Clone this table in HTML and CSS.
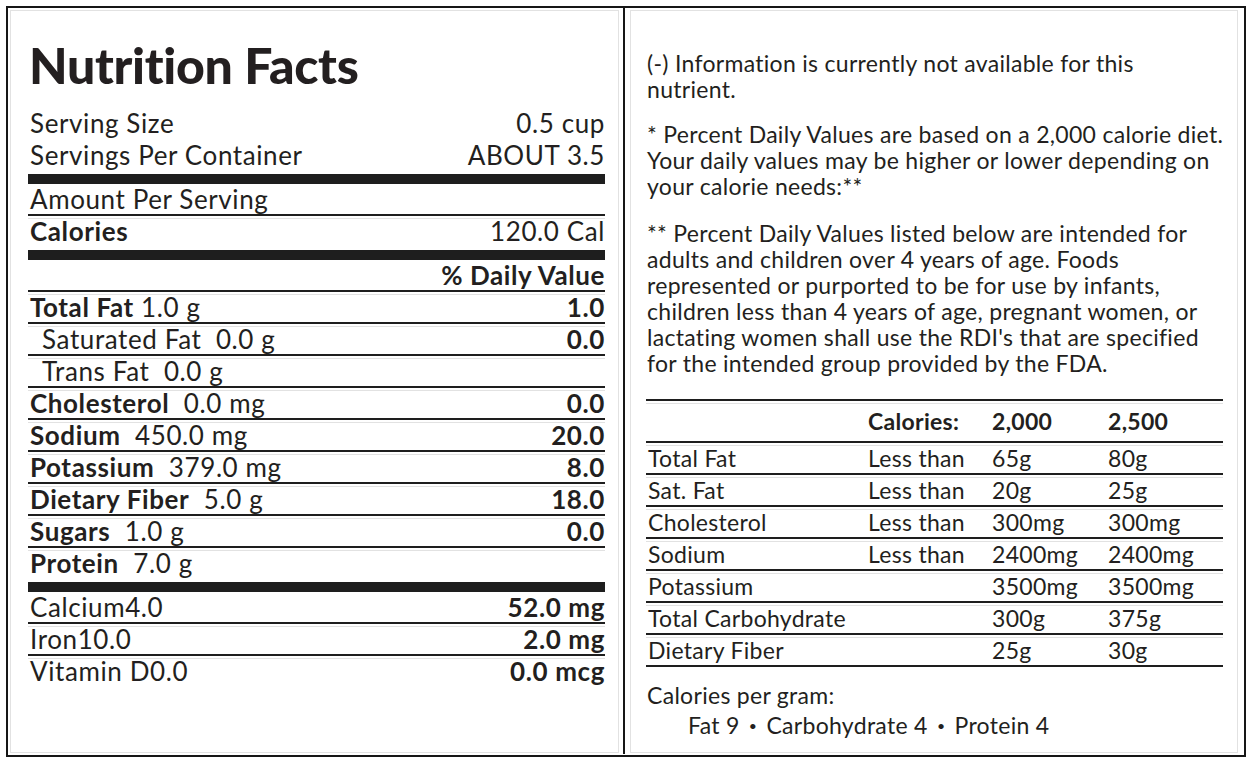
FILE: index.html
```html
<!DOCTYPE html>
<html lang="en">
<head>
<meta charset="utf-8">
<title>Nutrition Facts</title>
<link rel="stylesheet" href="styles.css">
</head>
<body>
<div class="frame">
  <section class="cell left">
    <h1 class="title">Nutrition Facts</h1>
    <div class="plain"><span>Serving Size</span><span>0.5 cup</span></div>
    <div class="plain"><span>Servings Per Container</span><span>ABOUT 3.5</span></div>
    <div class="thick"></div>
    <div class="row ruled"><span>Amount Per Serving</span></div>
    <div class="row ghost"><span><b>Calories</b></span><span>120.0 Cal</span></div>
    <div class="thick"></div>
    <div class="row ruled"><span></span><b>% Daily Value</b></div>
    <div class="row ruled ghost"><span><b>Total Fat</b> 1.0 g</span><b>1.0</b></div>
    <div class="row ruled ghost sub"><span>Saturated Fat&nbsp; 0.0 g</span><b>0.0</b></div>
    <div class="row ruled ghost sub"><span>Trans Fat&nbsp; 0.0 g</span></div>
    <div class="row ruled ghost"><span><b>Cholesterol</b>&nbsp; 0.0 mg</span><b>0.0</b></div>
    <div class="row ruled ghost"><span><b>Sodium</b>&nbsp; 450.0 mg</span><b>20.0</b></div>
    <div class="row ruled ghost"><span><b>Potassium</b>&nbsp; 379.0 mg</span><b>8.0</b></div>
    <div class="row ruled ghost"><span><b>Dietary Fiber</b>&nbsp; 5.0 g</span><b>18.0</b></div>
    <div class="row ruled ghost"><span><b>Sugars</b>&nbsp; 1.0 g</span><b>0.0</b></div>
    <div class="row ghost"><span><b>Protein</b>&nbsp; 7.0 g</span></div>
    <div class="thick"></div>
    <div class="row ruled"><span>Calcium4.0</span><b>52.0 mg</b></div>
    <div class="row ruled ghost"><span>Iron10.0</span><b>2.0 mg</b></div>
    <div class="row ghost"><span>Vitamin D0.0</span><b>0.0 mcg</b></div>
  </section>
  <div class="divider"></div>
  <section class="cell right">
    <p class="note">(-) Information is currently not available for this<br>nutrient.</p>
    <p class="note">* Percent Daily Values are based on a 2,000 calorie diet.<br>Your daily values may be higher or lower depending on<br>your calorie needs:**</p>
    <p class="note">** Percent Daily Values listed below are intended for<br>adults and children over 4 years of age. Foods<br>represented or purported to be for use by infants,<br>children less than 4 years of age, pregnant women, or<br>lactating women shall use the RDI's that are specified<br>for the intended group provided by the FDA.</p>
    <div class="dv">
      <div class="dv-row head"><span></span><b>Calories:</b><b>2,000</b><b>2,500</b></div>
      <div class="dv-row"><span>Total Fat</span><span>Less than</span><span>65g</span><span>80g</span></div>
      <div class="dv-row"><span>Sat. Fat</span><span>Less than</span><span>20g</span><span>25g</span></div>
      <div class="dv-row"><span>Cholesterol</span><span>Less than</span><span>300mg</span><span>300mg</span></div>
      <div class="dv-row"><span>Sodium</span><span>Less than</span><span>2400mg</span><span>2400mg</span></div>
      <div class="dv-row"><span>Potassium</span><span></span><span>3500mg</span><span>3500mg</span></div>
      <div class="dv-row"><span>Total Carbohydrate</span><span></span><span>300g</span><span>375g</span></div>
      <div class="dv-row"><span>Dietary Fiber</span><span></span><span>25g</span><span>30g</span></div>
    </div>
    <p class="cpg cpg-title">Calories per gram:</p>
    <p class="cpg indent">Fat 9 <span class="dot">&bull;</span> Carbohydrate 4 <span class="dot">&bull;</span> Protein 4</p>
  </section>
</div>
</body>
</html>
```

FILE: styles.css
```css
* { box-sizing: border-box; }
html, body { background: #fff; }
body {
  margin: 6px 8px 0 6px;
  font-family: Lato, "Open Sans", sans-serif;
  color: #231f20;
}
b { font-weight: 700; }

.frame {
  width: 1240px;
  height: 751px;
  border: 2px solid #161616;
  padding: 2px 6px 0 2px;
  display: grid;
  grid-template-columns: 609px 4px 2px 5px 608px;
  grid-template-rows: 743px;
}
.cell {
  border: 1px solid #e2e2e2;
}
.left {
  grid-column: 1;
  padding: 0 13px 0 17px;
}
.divider {
  grid-column: 3;
  background: #161616;
  margin-top: -2px;
  height: 746px;
}
.right {
  grid-column: 5;
  padding: 0 14px 0 15px;
}

/* left column */
.title {
  margin: 0;
  padding: 26px 0 0 1px;
  height: 96px;
  font-size: 50px;
  line-height: 56px;
  font-weight: 900;
  letter-spacing: -0.3px;
}
.plain {
  display: flex;
  justify-content: space-between;
  height: 32px;
  line-height: 32px;
  font-size: 26px;
  letter-spacing: 0.6px;
  padding: 0 0 0 2px;
}
.thick {
  height: 10px;
  background: #1e1e1e;
  margin-top: 3px;
}
.row {
  display: flex;
  justify-content: space-between;
  align-items: center;
  height: 30px;
  font-size: 26px;
  letter-spacing: 0.6px;
  line-height: 30px;
  padding-left: 2px;
  white-space: nowrap;
}
.row.ruled {
  height: 32px;
  border-bottom: 2px solid #1e1e1e;
}
.ghost {
  background: linear-gradient(#e2e2e2, #e2e2e2) 0 2px / 100% 1px no-repeat;
}
.row.sub { padding-left: 14px; }
.row + .thick { margin-top: 4px; }

/* right column */
.note {
  margin: 0 0 19px 0;
  font-size: 23px;
  letter-spacing: 0.3px;
  line-height: 26px;
  padding-left: 1px;
  white-space: nowrap;
}
.note:first-child { margin-top: 39px; }
.note:nth-child(2) { margin-bottom: 21px; }
.dv {
  margin-top: 23px;
  border-top: 2px solid #1e1e1e;
}
.dv-row {
  display: grid;
  grid-template-columns: 220px 124px 116px 1fr;
  height: 32px;
  line-height: 30px;
  font-size: 23px;
  letter-spacing: 0.3px;
  border-bottom: 2px solid #1e1e1e;
  background: linear-gradient(#e2e2e2, #e2e2e2) 0 2px / 100% 1px no-repeat;
  padding-left: 2px;
  white-space: nowrap;
}
.dv-row.head {
  height: 42px;
  line-height: 40px;
}
.cpg {
  margin: 0;
  font-size: 23px;
  letter-spacing: 0.3px;
  line-height: 30px;
  padding-left: 1px;
  white-space: nowrap;
}
.cpg-title { margin-top: 13px; }
.cpg.indent { padding-left: 42px; }
.dot {
  font-size: 14px;
  vertical-align: 3px;
  padding: 0 3px;
}
```
